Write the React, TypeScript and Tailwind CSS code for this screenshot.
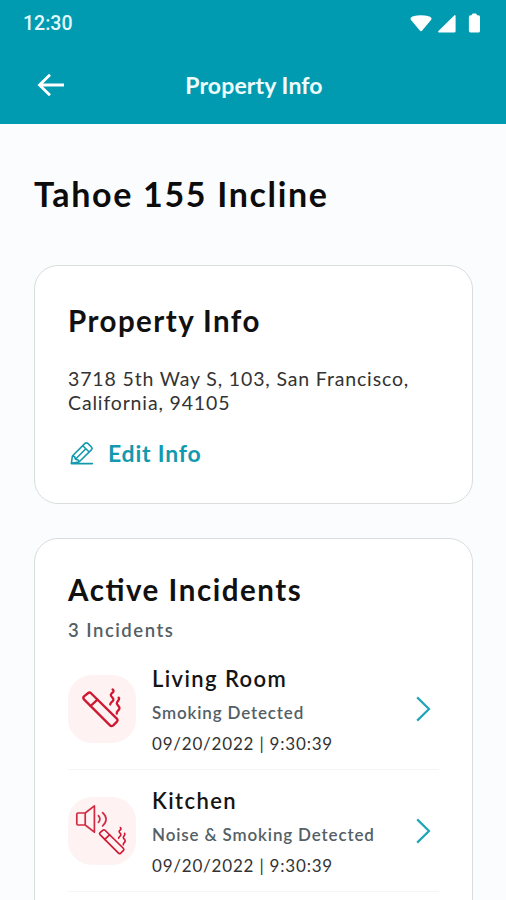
import type { ReactNode } from 'react';

function StatusBar() {
  return (
    <div className="flex h-[46px] items-center justify-between pl-[23px] pr-[24px]">
      <span className="pt-[1px] font-['Roboto',sans-serif] text-[19.5px] font-medium leading-none text-[#e3f8fa]">12:30</span>
      <svg width="72" height="22" viewBox="0 0 72 22" fill="#fff">
        <path d="M.6 6Q2.5 3.2 11 3.2T21.4 6Q21.8 7 21 8L12.2 18.6Q11 19.8 9.8 18.6L1 8Q.2 7 .6 6z" />
        <path d="M45.6 4v15.2q0 1.3-1.3 1.3H28.8q-1.2-.3-.4-1.4L44.2 3.4q1.2-.8 1.4.6z" />
        <path d="M61.8 2.4q.3-1 1.3-1h2.4q1 0 1.3 1v.8h1.6q1.6.3 1.6 1.8v14q-.2 1.5-1.7 1.6h-7.9q-1.4-.2-1.5-1.6V5q.1-1.5 1.6-1.8h1.3z" />
      </svg>
    </div>
  );
}

function Header() {
  return (
    <header className="h-[124px] bg-[#009bb0]">
      <StatusBar />
      <div className="grid h-[78px] grid-cols-[1fr_auto_1fr] items-center pl-[37px] pr-[35px]">
        <svg width="28" height="24" viewBox="0 0 28 24" fill="none" stroke="#fff" strokeWidth="2.8">
          <path d="M27 12H2M13 1.8L2.5 12L13 22.2" />
        </svg>
        <h1 className="text-[23px] font-bold leading-none tracking-[0.13px] text-[#effcfd]">Property Info</h1>
      </div>
    </header>
  );
}

function Cigarette() {
  return (
    <g fill="none" stroke="#cf1732" strokeWidth="2.3" strokeLinejoin="round" strokeLinecap="round">
      <path d="M7.8 14.4L12 11Q13.4 10 14.8 11.2L40.6 36.6Q42 38.2 40.8 39.6L36.8 43.6Q35.2 44.8 33.8 43.4L7.8 17.4Q6.4 15.8 7.8 14.4z" />
      <path d="M14.4 24L21.2 17.6" />
      <path d="M36.4 7.4C39.4 9.8 34.4 11 34.6 13C34.8 15.4 37.6 15.4 37.2 17.8C36.8 20 34 20 34 22.6" />
      <path d="M42.4 15.6C44.4 17.8 40.4 19.4 40.6 21.4C40.8 23.4 43.8 24.4 43.2 26.6C42.6 28.8 40 29 40.6 31.6" />
    </g>
  );
}

function SmokingIcon() {
  return (
    <svg width="68" height="68" viewBox="0 0 68 68">
      <g transform="translate(8.2 7)">
        <Cigarette />
      </g>
    </svg>
  );
}

function NoiseSmokingIcon() {
  return (
    <svg width="68" height="68" viewBox="0 0 68 68">
      <g fill="none" stroke="#d32a43" strokeWidth="1.7" strokeLinejoin="round" strokeLinecap="round">
        <path d="M17.2 16H10Q8.8 16 8.8 17.2V26.8Q8.8 28 10 28H17.2zM17.2 16L26.4 8.8V35.2L17.2 28" />
        <path d="M30.4 18.6Q33.4 22 30.4 25.4M34.6 15.6Q41.6 22 34.6 29" />
      </g>
      <g transform="translate(26.5 25.3) scale(.71)">
        <Cigarette />
      </g>
    </svg>
  );
}

type IncidentProps = {
  room: string;
  detail: string;
  time: string;
  icon: ReactNode;
};

function Incident({ room, detail, time, icon }: IncidentProps) {
  return (
    <li className="flex h-[122px] items-center border-b-[1.5px] border-[#f5f5f6]">
      <div className="size-[68px] shrink-0 rounded-[24px] bg-[#fef2f3]">{icon}</div>
      <div className="ml-[16px] grow pt-[4px]">
        <h3 className="text-[22px] font-semibold leading-[30px] tracking-[1.4px] text-[#141414]">{room}</h3>
        <p className="mt-[5px] text-[17px] font-semibold leading-[28px] tracking-[0.85px] text-[#536065]">{detail}</p>
        <p className="mt-[3px] text-[17px] leading-[28px] tracking-[0.8px] text-[#333]">{time}</p>
      </div>
      <svg className="mr-[8px]" width="15" height="26" viewBox="0 0 15 26" fill="none" stroke="#20a5b8" strokeWidth="2.2">
        <path d="M1.2 1.4L13 13L1.2 24.6" />
      </svg>
    </li>
  );
}

export default function App() {
  return (
    <div className="h-[900px] overflow-hidden bg-[#fafcfe] font-['Lato',sans-serif]">
      <Header />
      <main className="px-[34px]">
        <h2 className="pt-[49px] text-[34px] font-bold leading-[42px] tracking-[1.67px] text-[#0c0c0c]">
          Tahoe 155 Incline
        </h2>

        <section className="mt-[50px] h-[239px] w-[439px] rounded-[24px] border-[1.5px] border-[#dadddd] bg-white px-[33px] pt-[37px]">
          <h2 className="text-[29.5px] font-bold leading-[36px] tracking-[1.45px] text-[#111]">Property Info</h2>
          <p className="mt-[28px] text-[19.5px] leading-[24px] tracking-[0.85px] text-[#333]">
            3718 5th Way S, 103, San Francisco,
            <br />
            California, 94105
          </p>
          <button className="mt-[24px] flex h-[28px] items-center text-[23px] font-bold leading-none tracking-[0.8px] text-[#1399ae]">
            <svg className="ml-[2px] mr-[14px]" width="24" height="24" viewBox="0 0 24 24" fill="none" stroke="currentColor" strokeWidth="1.6" strokeLinejoin="round" strokeLinecap="round">
              <path d="M2.4 15L15 2.4Q16.4 1.2 17.8 2.4L21.6 6.2Q22.6 7.4 21.6 8.6L9 21L1.4 22.2zM12.8 4.8L19.2 11M5.4 18.2L15.6 8M2.4 15L4.6 15.6L5.4 18.2L8.2 19L9 21" />
              <path d="M1.4 22.6H22.4" />
            </svg>
            Edit Info
          </button>
        </section>

        <section className="mt-[34px] h-[500px] w-[439px] rounded-[24px] border-[1.5px] border-[#dadddd] bg-white px-[33px] pt-[33px]">
          <h2 className="text-[29.5px] font-bold leading-[36px] tracking-[1.55px] text-[#111] [font-feature-settings:'liga'_1,'dlig'_1]">
            Active Incidents
          </h2>
          <p className="mt-[9px] text-[18.5px] font-semibold leading-[26px] tracking-[1.5px] text-[#536065]">3 Incidents</p>
          <ul className="mt-[5px]">
            <Incident room="Living Room" detail="Smoking Detected" time="09/20/2022 | 9:30:39" icon={<SmokingIcon />} />
            <Incident room="Kitchen" detail="Noise & Smoking Detected" time="09/20/2022 | 9:30:39" icon={<NoiseSmokingIcon />} />
          </ul>
        </section>
      </main>
    </div>
  );
}
